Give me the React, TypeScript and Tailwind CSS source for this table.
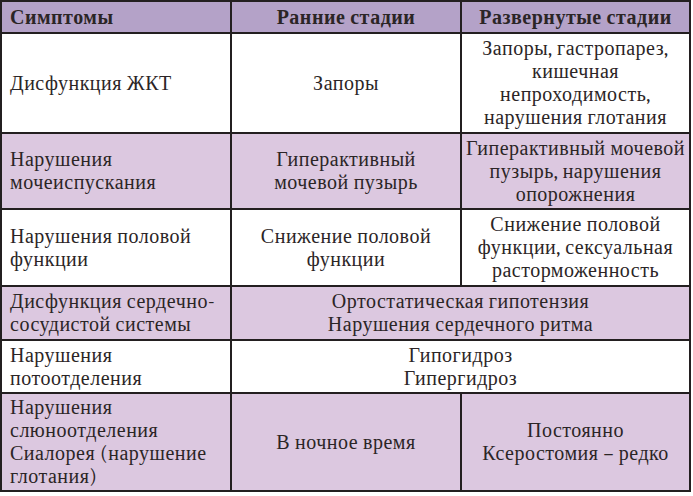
import React from "react";

type Cell = { lines: string[]; span?: boolean; left?: boolean };
type Row = { h: string; bg: string; cells: Cell[]; head?: boolean };

const lilac = "bg-[#dcc8e0]";

const rows: Row[] = [
  {
    h: "h-[30px]",
    bg: "bg-[#b4a2c8]",
    head: true,
    cells: [
      { lines: ["Симптомы"], left: true },
      { lines: ["Ранние стадии"] },
      { lines: ["Развернутые стадии"] },
    ],
  },
  {
    h: "h-[98px]",
    bg: "bg-white",
    cells: [
      { lines: ["Дисфункция ЖКТ"], left: true },
      { lines: ["Запоры"] },
      { lines: ["Запоры, гастропарез,", "кишечная", "непроходимость,", "нарушения глотания"] },
    ],
  },
  {
    h: "h-[74px]",
    bg: lilac,
    cells: [
      { lines: ["Нарушения", "мочеиспускания"], left: true },
      { lines: ["Гиперактивный", "мочевой пузырь"] },
      { lines: ["Гиперактивный мочевой", "пузырь, нарушения", "опорожнения"] },
    ],
  },
  {
    h: "h-[75px]",
    bg: "bg-white",
    cells: [
      { lines: ["Нарушения половой", "функции"], left: true },
      { lines: ["Снижение половой", "функции"] },
      { lines: ["Снижение половой", "функции, сексуальная", "расторможенность"] },
    ],
  },
  {
    h: "h-[52px]",
    bg: lilac,
    cells: [
      { lines: ["Дисфункция сердечно-", "сосудистой системы"], left: true },
      { lines: ["Ортостатическая гипотензия", "Нарушения сердечного ритма"], span: true },
    ],
  },
  {
    h: "h-[51px]",
    bg: "bg-white",
    cells: [
      { lines: ["Нарушения", "потоотделения"], left: true },
      { lines: ["Гипогидроз", "Гипергидроз"], span: true },
    ],
  },
  {
    h: "h-[96px]",
    bg: lilac,
    cells: [
      {
        lines: ["Нарушения", "слюноотделения", "Сиалорея (нарушение", "глотания)"],
        left: true,
      },
      { lines: ["В ночное время"] },
      { lines: ["Постоянно", "Ксеростомия – редко"] },
    ],
  },
];

export default function App() {
  return (
    <div className="h-[496px] w-[693px] bg-white font-serif">
      <div className="grid w-[691px] grid-cols-[228px_228px_227px] gap-[2px] bg-[#231f20] p-[2px] font-serif text-[20px] leading-[23px] tracking-[0.5px] text-[#2b2526]">
        {rows.map((row, i) =>
          row.cells.map((c, j) => (
            <div
              key={`${i}-${j}`}
              className={`${row.h} ${row.bg} flex items-center whitespace-nowrap font-serif ${
                c.span ? "col-span-2" : ""
              } ${c.left ? "justify-start pl-[8px]" : "justify-center text-center"} ${
                row.head ? "font-bold" : ""
              }`}
            >
              <div className="font-serif">
                {c.lines.map((l, k) => (
                  <div key={k}>{l}</div>
                ))}
              </div>
            </div>
          ))
        )}
      </div>
    </div>
  );
}
